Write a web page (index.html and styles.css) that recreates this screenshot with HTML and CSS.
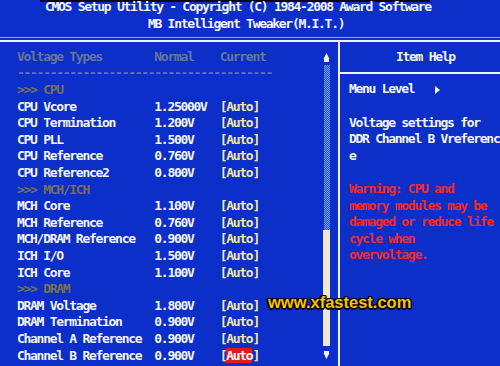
FILE: index.html
```html
<!DOCTYPE html>
<html>
<head>
<meta charset="utf-8">
<link rel="stylesheet" href="styles.css">
</head>
<body>
<div class="screen">
  <header class="title">
    <div class="t1">CMOS Setup Utility - Copyright (C) 1984-2008 Award Software</div>
    <div class="t2">MB Intelligent Tweaker(M.I.T.)</div>
  </header>
  <div class="rule-light"></div>
  <main class="main">
    <section class="left">
      <div class="list">
        <div class="row dim"><span>Voltage Types</span><span>Normal</span><span>Current</span></div>
        <div class="row dim dashes">---------------------------------------</div>
        <div class="row group">&gt;&gt;&gt; CPU</div>
        <div class="row"><span>CPU Vcore</span><span>1.25000V</span><span class="cur">[Auto]</span></div>
        <div class="row"><span>CPU Termination</span><span>1.200V</span><span class="cur">[Auto]</span></div>
        <div class="row"><span>CPU PLL</span><span>1.500V</span><span class="cur">[Auto]</span></div>
        <div class="row"><span>CPU Reference</span><span>0.760V</span><span class="cur">[Auto]</span></div>
        <div class="row"><span>CPU Reference2</span><span>0.800V</span><span class="cur">[Auto]</span></div>
        <div class="row group">&gt;&gt;&gt; MCH/ICH</div>
        <div class="row"><span>MCH Core</span><span>1.100V</span><span class="cur">[Auto]</span></div>
        <div class="row"><span>MCH Reference</span><span>0.760V</span><span class="cur">[Auto]</span></div>
        <div class="row"><span>MCH/DRAM Reference</span><span>0.900V</span><span class="cur">[Auto]</span></div>
        <div class="row"><span>ICH I/O</span><span>1.500V</span><span class="cur">[Auto]</span></div>
        <div class="row"><span>ICH Core</span><span>1.100V</span><span class="cur">[Auto]</span></div>
        <div class="row group">&gt;&gt;&gt; DRAM</div>
        <div class="row"><span>DRAM Voltage</span><span>1.800V</span><span class="cur">[Auto]</span></div>
        <div class="row"><span>DRAM Termination</span><span>0.900V</span><span class="cur">[Auto]</span></div>
        <div class="row"><span>Channel A Reference</span><span>0.900V</span><span class="cur">[Auto]</span></div>
        <div class="row"><span>Channel B Reference</span><span>0.900V</span><span class="cur">[<b class="sel">Auto</b>]</span></div>
      </div>
      <div class="scroll">
        <svg class="arrow-up" width="7" height="9" viewBox="0 0 7 9"><polygon points="3.5,0 6.5,6 0.5,6" fill="#f4f0dc"/><rect x="1" y="6" width="5" height="3" fill="#f4f0dc"/></svg>
        <div class="track"></div>
        <div class="thumb"></div>
        <svg class="arrow-down" width="7" height="8" viewBox="0 0 7 8"><rect x="1" y="0" width="5" height="2" fill="#f4f0dc"/><polygon points="0.5,2 6.5,2 3.5,8" fill="#f4f0dc"/></svg>
      </div>
    </section>
    <aside class="right">
      <div class="help-head">Item Help</div>
      <div class="help-body">
        <div class="row">Menu Level&nbsp;&nbsp;&nbsp;<svg class="tri" width="6" height="8" viewBox="0 0 6 8"><polygon points="1,0 6,4 1,8" fill="#f4f4f4"/></svg></div>
        <div class="row">&nbsp;</div>
        <div class="row">Voltage settings for</div>
        <div class="row">DDR Channel B Vreferenc</div>
        <div class="row">e</div>
        <div class="row">&nbsp;</div>
        <div class="row warn">Warning: CPU and</div>
        <div class="row warn">memory modules may be</div>
        <div class="row warn">damaged or reduce life</div>
        <div class="row warn">cycle when</div>
        <div class="row warn">overvoltage.</div>
      </div>
    </aside>
  </main>
  <div class="watermark">www.xfastest.com</div>
</div>
</body>
</html>
```
FILE: styles.css
```css
html, body {
  margin: 0;
  padding: 0;
}
body {
  width: 500px;
  height: 366px;
  overflow: hidden;
  background:
    linear-gradient(#050510, #050510) 40px 0 / 390px 2px no-repeat,
    #0b2fc8;
  font-family: "DejaVu Sans Mono", "Liberation Mono", monospace;
  font-weight: bold;
  font-size: 13px;
  letter-spacing: -1.286px;
  line-height: 16.6px;
  color: #f4f4f4;
}
.screen {
  position: relative;
  width: 500px;
  height: 366px;
}
.title {
  margin-top: -1px;
}
.t1 {
  padding-left: 45px;
  white-space: pre;
}
.t2 {
  padding-left: 148px;
  white-space: pre;
}
.rule-light {
  margin-top: 4.7px;
  height: 1px;
  background: #8ea4e6;
}
.main {
  margin-top: 2px;
  border-top: 2px solid #eef0ff;
  display: flex;
  height: 324px;
}
.left {
  width: 338px;
  display: flex;
}
.list {
  width: 306px;
  padding-left: 17px;
  padding-top: 7px;
}
.row {
  height: 16.6px;
  white-space: pre;
  display: grid;
  grid-template-columns: 137.3px 65.4px auto;
}
.dashes, .group {
  display: block;
}
.dim {
  color: #687698;
}
.group {
  color: #7a7058;
}
.cur {
  color: #f0e8a4;
}
.sel {
  background: #e41818;
  color: #ffffff;
  font-weight: bold;
}
.scroll {
  width: 7px;
  display: flex;
  flex-direction: column;
  align-items: center;
}
.arrow-up {
  display: block;
  margin-top: 11px;
}
.track {
  margin-top: 3px;
  width: 6px;
  height: 165px;
  background: repeating-conic-gradient(#6a98ee 0 25%, #2c56d6 0 50%) 0 0 / 2px 2px;
}
.thumb {
  width: 7px;
  height: 116px;
  background: #ece8d4;
}
.arrow-down {
  display: block;
  margin-top: 5px;
}
.right {
  width: 160px;
  border-left: 2px solid #eef0ff;
}
.help-head {
  padding-top: 7px;
  padding-left: 56px;
  height: 16.6px;
  padding-bottom: 6.6px;
  border-bottom: 2px solid #eef0ff;
  white-space: pre;
}
.help-body {
  padding-top: 7.4px;
  padding-left: 9px;
}
.help-body .row {
  display: block;
}
.tri {
  display: inline-block;
  vertical-align: -1px;
}
.warn {
  color: #f42a2a;
}
.watermark {
  position: absolute;
  left: 268px;
  top: 293px;
  font-family: "Liberation Sans", Arial, sans-serif;
  font-weight: bold;
  font-size: 16.5px;
  letter-spacing: 0;
  line-height: 20px;
  color: #f8c400;
  text-shadow:
    1.5px 0 0 #000, -1.5px 0 0 #000, 0 1.5px 0 #000, 0 -1.5px 0 #000,
    1px 1px 0 #000, -1px -1px 0 #000, 1px -1px 0 #000, -1px 1px 0 #000;
}
```
